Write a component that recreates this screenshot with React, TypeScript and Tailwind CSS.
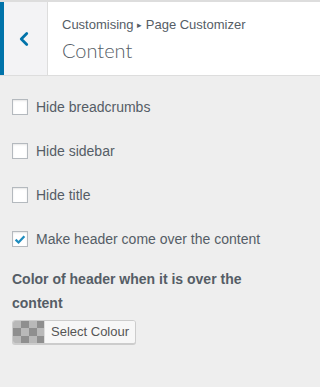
import { ChevronLeft } from "lucide-react";

const options = [
  { label: "Hide breadcrumbs", checked: false },
  { label: "Hide sidebar", checked: false },
  { label: "Hide title", checked: false },
  { label: "Make header come over the content", checked: true },
];

function Checkbox({ checked }: { checked: boolean }) {
  return (
    <span className="w-4 h-4 shrink-0 bg-white border border-[#b4b9be] shadow-[inset_0_1px_2px_rgba(0,0,0,0.1)] flex items-center justify-center">
      {checked && (
        <svg viewBox="0 0 16 16" className="w-[15px] h-[15px]">
          <path d="M3 8.2 L6.3 11.4 L13 4.2" fill="none" stroke="#1e8cbe" strokeWidth="2.6" strokeLinecap="butt" strokeLinejoin="miter" />
        </svg>
      )}
    </span>
  );
}

function Swatch() {
  const cells = [];
  for (let r = 0; r < 3; r++) {
    for (let c = 0; c < 4; c++) {
      const dark = (r + c) % 2 === 1;
      cells.push(<div key={`${r}-${c}`} className={dark ? "bg-[#8f8f8f]" : "bg-[#b9b9b9]"} />);
    }
  }
  return <div className="w-[31px] h-full grid grid-cols-[8px_8px_8px_7px] grid-rows-3 shrink-0">{cells}</div>;
}

export default function App() {
  return (
    <div className="w-full min-h-screen bg-[#eeeeee] text-[#555d66] overflow-hidden" style={{ fontFamily: '"Liberation Sans", Arial, sans-serif' }}>
      {/* Section header */}
      <div className="flex h-[76px] bg-white border-t-2 border-b border-[#dddddd]">
        <button className="w-[48px] shrink-0 bg-[#f3f3f5] border-l-4 border-[#0073aa] border-r border-r-[#dddddd] flex items-center justify-center text-[#0073aa]">
          <ChevronLeft className="w-[22px] h-[22px] -ml-1" strokeWidth={3} />
        </button>
        <div className="pl-[14px] pt-[13px]">
          <div className="text-[13px] leading-[20px]">
            Customising <span className="text-[9px] relative -top-px">▸</span> Page Customizer
          </div>
          <h2 className="text-[20px] leading-[28px] font-light" style={{ fontFamily: 'Lato, "Liberation Sans", sans-serif' }}>
            Content
          </h2>
        </div>
      </div>

      {/* Controls */}
      <div className="px-3 pt-[23px] pb-10">
        {options.map((o) => (
          <label key={o.label} className="flex items-center gap-2 h-4 mb-[28px] text-[14px]">
            <Checkbox checked={o.checked} />
            <span>{o.label}</span>
          </label>
        ))}
        <div className="-mt-[8px] text-[14px] font-bold leading-[24px] pr-10">
          Color of header when it is over the content
        </div>
        <button className="mt-[5px] h-6 flex items-stretch border border-[#cccccc] rounded-[3px] overflow-hidden bg-[#f7f7f7] shadow-[0_1px_0_#cccccc]">
          <Swatch />
          <span className="bg-[#f7f7f7] border-l border-[#dddddd] px-[6px] text-[13px] leading-[22px] text-[#555555]">Select Colour</span>
        </button>
      </div>
    </div>
  );
}
